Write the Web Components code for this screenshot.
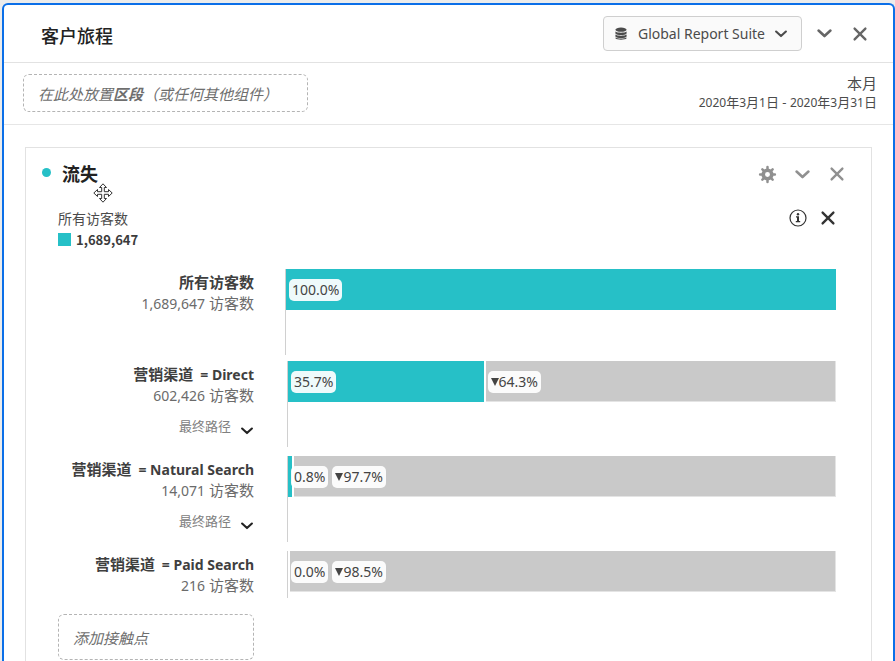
<!DOCTYPE html>
<html lang="zh-CN">
<head>
<meta charset="utf-8">
<title>客户旅程</title>
<style>
html,body{margin:0;height:100%}
body{background:#ececec;overflow:hidden;font-family:"Noto Sans","Noto Sans CJK SC",sans-serif;font-size:15px;color:#4b4b4b}
</style>
</head>
<body>
<journey-panel heading="客户旅程">
  <segment-drop slot="drop">在此处放置<b>区段</b>（或任何其他组件）</segment-drop>
  <date-range slot="date" range="2020年3月1日 - 2020年3月31日">本月</date-range>
  <fallout-card heading="流失">
    <fallout-legend slot="legend" value="1,689,647">所有访客数</fallout-legend>
    <fallout-step first pass="100.0" count="1,689,647">所有访客数</fallout-step>
    <fallout-step more pass="35.7" drop="64.3" count="602,426" name="= Direct">营销渠道</fallout-step>
    <fallout-step more pass="0.8" drop="97.7" count="14,071" name="= Natural Search">营销渠道</fallout-step>
    <fallout-step last pass="0.0" drop="98.5" count="216" name="= Paid Search">营销渠道</fallout-step>
    <segment-drop slot="add" tall>添加接触点</segment-drop>
  </fallout-card>
</journey-panel>
<script>
const base = `*{box-sizing:border-box}
button{appearance:none;border:0;background:none;margin:0;padding:0;font:inherit;color:inherit;cursor:pointer;display:flex;align-items:center;justify-content:center}
svg{display:block}h1,h2,h3,p{margin:0}`;
const shapes = {
  chevron: '<path d="M3 6.5 10 13l7-6.5" fill="none" stroke="currentColor" stroke-width="3" stroke-linecap="round" stroke-linejoin="round"/>',
  cross: '<path d="M4 4 16 16M16 4 4 16" fill="none" stroke="currentColor" stroke-width="2.6" stroke-linecap="round"/>',
  data: '<g fill="currentColor"><ellipse cx="10" cy="4.6" rx="7" ry="2.6"/><path d="M3 7c2.500 2 11.500 2 14 0v2.300c-1.500 2.500-12.500 2.500-14 0zM3 10.700c2.500 2 11.500 2 14 0V13c-1.500 2.500-12.500 2.500-14 0zM3 14.400c2.500 1.600 11.500 1.600 14 0v.9c-1.500 2.400-12.500 2.400-14 0z"/></g>',
  gear: '<g stroke="currentColor" fill="none"><circle cx="10" cy="10" r="4.500" stroke-width="3.800"/><path stroke-width="2.600" stroke-linecap="round" d="M10 2.200v2M10 15.800v2M2.200 10h2M15.800 10h2M4.600 4.600l1.400 1.400M14 14l1.400 1.400M4.600 15.400l1.400-1.400M14 6l1.400-1.400"/></g>',
  info: '<circle cx="10" cy="10" r="8" fill="none" stroke="currentColor" stroke-width="1.200"/><circle cx="10" cy="6.300" r="1.200" fill="currentColor"/><path fill="currentColor" d="M8 8.300h3v4.700h1.200v1.200H7.800V13H9V9.500H8z"/>',
  move: '<path fill="#fff" stroke="#333" stroke-width="1" stroke-linejoin="round" d="M10 .8 13.500 4.500H11.300v4.200h4.200V6.500L19.200 10l-3.700 3.500v-2.200h-4.200v4.200h2.200L10 19.200 6.500 15.500h2.200v-4.200H4.500v2.200L.8 10 4.500 6.500v2.200h4.200V4.500H6.500z"/>'
};
class UiIcon extends HTMLElement{
  connectedCallback(){
    const s=this.getAttribute('size')||20;
    this.attachShadow({mode:'open'}).innerHTML=`<style>:host{display:block;flex:none}svg{display:block}</style><svg width="${s}" height="${s}" viewBox="0 0 20 20" aria-hidden="true">${shapes[this.getAttribute('name')]}</svg>`;
  }
}
customElements.define('ui-icon',UiIcon);

class JourneyPanel extends HTMLElement{
  connectedCallback(){
    this.attachShadow({mode:'open'}).innerHTML=`<style>${base}
:host{display:block;box-sizing:border-box;min-height:calc(100vh - 3px);margin:3px 0 0 2px;border:2px solid #0b6fe8;border-bottom:0;border-radius:6px 6px 0 0;background:#fff}
header{display:flex;align-items:center;height:58px;border-bottom:1px solid #e2e2e2;padding:0 24px 0 37px}
h1{flex:1;font-size:18px;font-weight:500;line-height:24px;color:#222;padding-top:4px}
.suite{height:35px;border:1px solid #cfcfcf;border-radius:4px;background:#fafafa;padding:0 13px 0 9px;gap:9px;font-size:14px;margin-right:14px}
.tools{display:flex;gap:18px;color:#666}
.sub{display:flex;justify-content:space-between;height:62px;border-bottom:1px solid #e6e6e6;padding:0 16px 0 19px}
slot[name=drop]{display:block;padding-top:11px}
slot[name=date]{display:block;padding-top:10px}
main{padding:22px 21px 0 21px}
</style>
<header><h1>${this.getAttribute('heading')}</h1>
<button class="suite" aria-haspopup="listbox"><ui-icon name="data" size="16"></ui-icon><span>Global Report Suite</span><ui-icon name="chevron" size="14"></ui-icon></button>
<div class="tools"><button aria-label="折叠"><ui-icon name="chevron" size="17"></ui-icon></button><button aria-label="关闭"><ui-icon name="cross" size="18"></ui-icon></button></div></header>
<div class="sub"><slot name="drop"></slot><slot name="date"></slot></div>
<main><slot></slot></main>`;
  }
}
customElements.define('journey-panel',JourneyPanel);

class SegmentDrop extends HTMLElement{
  connectedCallback(){
    this.attachShadow({mode:'open'}).innerHTML=`<style>
:host{display:flex;align-items:center;box-sizing:border-box;width:285px;height:38px;border:1px dashed #b4b4b4;border-radius:6px;padding:0 14px;font-style:italic;color:#6e6e6e;white-space:nowrap}
:host([tall]){width:196px;height:46px}
</style><span><slot></slot></span>`;
  }
}
customElements.define('segment-drop',SegmentDrop);

class DateRange extends HTMLElement{
  connectedCallback(){
    const range=this.getAttribute('range').replace(/\d+/g,'<span>$&</span>');
    this.attachShadow({mode:'open'}).innerHTML=`<style>${base}
:host{display:block;text-align:right;white-space:nowrap}
p{line-height:20px}.r{font-size:13px;line-height:18px}.r span{font-size:12px}
</style><p><slot></slot></p><p class="r">${range}</p>`;
  }
}
customElements.define('date-range',DateRange);

class FalloutCard extends HTMLElement{
  connectedCallback(){
    this.attachShadow({mode:'open'}).innerHTML=`<style>${base}
:host{display:block;position:relative;border:1px solid #e2e2e2;border-bottom:0;background:#fff;padding:12px 35px 1px 32px}
header{display:flex;align-items:center;height:28px;margin:0 -10px 0 -16px}
i{width:9px;height:9px;border-radius:50%;background:#26c0c7;margin:0 11px 4px 0}
h2{flex:1;font-size:18px;line-height:24px;color:#222}
.tools{display:flex;gap:17px;color:#909090}
.move{position:absolute;left:67px;top:35px}
</style>
<header><i></i><h2>${this.getAttribute('heading')}</h2><div class="tools"><button aria-label="设置"><ui-icon name="gear" size="19"></ui-icon></button><button aria-label="折叠"><ui-icon name="chevron" size="17"></ui-icon></button><button aria-label="关闭"><ui-icon name="cross" size="18"></ui-icon></button></div></header>
<ui-icon class="move" name="move" size="20"></ui-icon>
<slot name="legend"></slot><slot></slot><slot name="add"></slot>`;
  }
}
customElements.define('fallout-card',FalloutCard);

class FalloutLegend extends HTMLElement{
  connectedCallback(){
    this.attachShadow({mode:'open'}).innerHTML=`<style>${base}
:host{box-sizing:border-box;display:flex;justify-content:space-between;height:81px;padding-top:20px}
.name{font-size:14px;line-height:21px}
.val{display:flex;align-items:center;gap:5px;font:700 13px/21px "Noto Sans CJK SC",sans-serif;color:#3b3b3b}
i{width:13px;height:13px;background:#26c0c7}
.tools{display:flex;align-items:center;gap:11px;height:20px;margin-right:-1px;color:#333}
</style><div><p class="name"><slot></slot></p><p class="val"><i></i>${this.getAttribute('value')}</p></div>
<div class="tools"><button aria-label="信息"><ui-icon name="info" size="20"></ui-icon></button><button aria-label="移除"><ui-icon name="cross" size="18"></ui-icon></button></div>`;
  }
}
customElements.define('fallout-legend',FalloutLegend);

class FalloutStep extends HTMLElement{
  connectedCallback(){
    const g=n=>this.getAttribute(n)||'', pass=+g('pass'), drop=g('drop');
    this.attachShadow({mode:'open'}).innerHTML=`<style>${base}
:host{display:grid;grid-template-columns:196px minmax(0,1fr);column-gap:33px;padding-bottom:9px}
:host([first]){padding-bottom:6px;column-gap:31px}
:host([last]){padding-bottom:16px}
.label{display:flex;flex-direction:column;align-items:flex-end;padding-top:3px;white-space:nowrap}
h3{font-size:15px;line-height:21px;font-weight:700;color:#3f3f3f}
p{line-height:21px;color:#6b6b6b}
h3 span,p span{font-size:14px}
h3 .name{margin-left:3px}
.path{font-size:13px;line-height:18px;gap:9px;margin-top:8px;color:#808080}
.path ui-icon{color:#222;margin-top:10px}
.chart{height:86px;border-left:1px solid #d0d0d0}
:host([last]) .chart{height:47px}
.bar{position:relative;display:flex;gap:2px;height:41px}
.pass{width:${pass}%;background:#26c0c7}
.drop{flex:1;background:#c9c9c9;border:solid #e4e4e4;border-width:0 1px 1px 0}
.tags{position:absolute;inset:0;display:flex;align-items:center;gap:2px;padding-left:3px}
.first{flex:none;width:${pass}%;min-width:max-content;padding-right:2px;display:flex}
.tag{height:22px;border-radius:5px;background:rgba(255,255,255,.92);padding:0 3px;font-size:14px;line-height:22px;color:#444;display:flex;align-items:center}
.tag i{border:4px solid transparent;border-top:8px solid #444;border-bottom:0}
</style>
<div class="label"><h3><slot></slot>${g('name')?` <span class="name">${g('name')}</span>`:''}</h3><p><span>${g('count')}</span> 访客数</p>
${this.hasAttribute('more')?'<button class="path" aria-haspopup="menu">最终路径<ui-icon name="chevron" size="14"></ui-icon></button>':''}</div>
<div class="chart"><div class="bar"><div class="pass"></div>${drop?'<div class="drop"></div>':''}
<div class="tags"><div class="first"><span class="tag">${g('pass')}%</span></div>${drop?`<span class="tag"><i></i>${drop}%</span>`:''}</div></div></div>`;
  }
}
customElements.define('fallout-step',FalloutStep);
</script>
</body>
</html>
